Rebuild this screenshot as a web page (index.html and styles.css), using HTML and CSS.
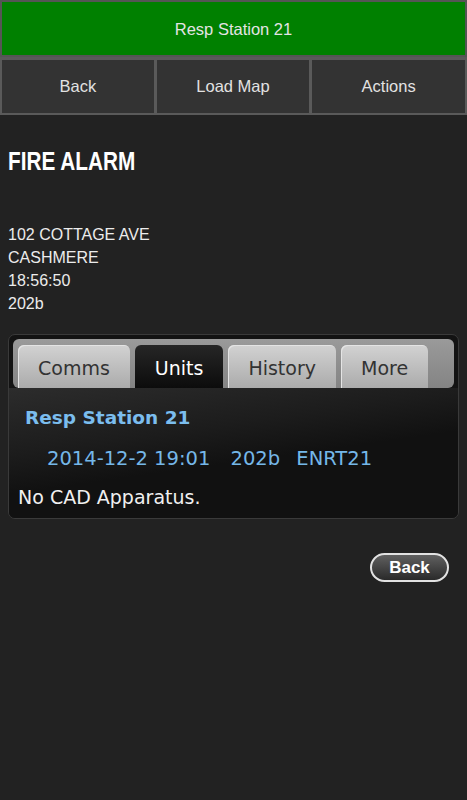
FILE: index.html
```html
<!DOCTYPE html>
<html lang="en">

<head>
    <meta charset="utf-8">
    <meta name="viewport" content="width=device-width, initial-scale=1.0">
    <title>Incident</title>
    <link rel="stylesheet" href="styles.css">
</head>

<body>

    <header>
        <div class="station">Resp Station 21</div>

        <nav class="topnav">
            <button>Back</button>
            <button>Load Map</button>
            <button>Actions</button>
        </nav>
    </header>

    <main class="indhold">

        <h1><span>FIRE ALARM</span></h1>

        <p class="adresse">
            102 COTTAGE AVE<br>
            CASHMERE<br>
            18:56:50<br>
            202b
        </p>

        <!-- faneblade -->
        <section class="panel">
            <div class="faner">
                <div class="fane">Comms</div>
                <div class="fane aktiv">Units</div>
                <div class="fane">History</div>
                <div class="fane">More</div>
            </div>

            <div class="panel-krop">
                <div class="enhed">Resp Station 21</div>
                <div class="enhed-linje">
                    <span>2014-12-2 19:01</span>
                    <span class="kort">202b</span>
                    <span>ENRT21</span>
                </div>
                <div class="ingen">No CAD Apparatus.</div>
            </div>
        </section>

        <div class="knap-linje">
            <button class="tilbage">Back</button>
        </div>

    </main>

</body>

</html>
```

FILE: styles.css
```css
body {
    margin: 0;
    background-color: #222222;
    font-family: "Liberation Sans", Arial, sans-serif;
    color: #eeeeee;
}

.station {
    height: 52px;
    padding-top: 1px;
    border: 2px solid #555555;
    background-color: #008000;
    display: flex;
    align-items: center;
    justify-content: center;
    font-size: 16.5px;
    color: #e4e4e4;
}

.topnav {
    display: grid;
    grid-template-columns: 1fr 1fr 1fr;
}

.topnav button {
    height: 58px;
    border: 2px solid #5a5a5a;
    border-top-width: 3px;
    background-color: #333333;
    color: #e2e2e2;
    font-family: "Liberation Sans", Arial, sans-serif;
    font-size: 16.5px;
    padding: 0;
}

.topnav button + button {
    border-left-width: 1px;
}

.indhold {
    padding: 0 8px;
}

h1 {
    margin: 31px 0 0 0;
    font-size: 25px;
    line-height: 30px;
    font-weight: bold;
    color: #ffffff;
}

/* smal overskrift */
h1 span {
    display: inline-block;
    transform: scaleX(0.83);
    transform-origin: left center;
}

.adresse {
    margin: 47px 0 0 0;
    font-size: 16px;
    line-height: 23px;
    color: #ececec;
}

/********************  Faneblade  ********************/

.panel {
    margin-top: 19px;
    border: 1px solid #3a3a3a;
    border-radius: 7px;
    background-color: #131313;
    padding: 4px;
    font-family: "DejaVu Sans", sans-serif;
}

.faner {
    height: 43px;
    padding: 6px 0 0 5px;
    background: linear-gradient(#9a9a9a, #848484);
    border-radius: 6px;
    display: flex;
    align-items: flex-end;
    gap: 5px;
}

.fane {
    height: 43px;
    padding: 2px 20px 0 20px;
    box-sizing: border-box;
    display: flex;
    align-items: center;
    font-size: 19px;
    color: #333333;
    background: linear-gradient(#d2d2d2, #ababab);
    border-radius: 6px 6px 0 0;
    box-shadow: inset 1px 1px 0 #e4e4e4;
}

.fane.aktiv {
    color: #ffffff;
    background: linear-gradient(#262626, #0c0c0c);
    box-shadow: none;
}

.panel-krop {
    margin: 0 -4px -4px -4px;
    padding: 10px 5px 4px 9px;
    background: linear-gradient(172deg, #2c2c2c 0%, #1c1c1c 35%, #111111 55%, #111111 100%);
    border-radius: 0 0 6px 6px;
}

.enhed {
    padding-left: 7px;
    line-height: 40px;
    font-size: 18.5px;
    font-weight: bold;
    color: #7bbdee;
}

.enhed-linje {
    padding-left: 29px;
    line-height: 42px;
    font-size: 19.5px;
    color: #75b7e8;
}

.enhed-linje span {
    margin-right: 14px;
}

.enhed-linje .kort {
    margin-right: 10px;
}

.ingen {
    line-height: 34px;
    font-size: 19px;
    color: #f0f0f0;
}

/********************  Knap  ********************/

.knap-linje {
    display: flex;
    justify-content: flex-end;
    padding-right: 10px;
    margin-top: 34px;
}

.tilbage {
    width: 79px;
    height: 29px;
    border: 2px solid #e2e2e2;
    border-radius: 15px;
    background: linear-gradient(#606060, #2a2a2a);
    color: #ffffff;
    font-family: "Liberation Sans", Arial, sans-serif;
    font-weight: bold;
    font-size: 17px;
    padding: 0;
}
```
